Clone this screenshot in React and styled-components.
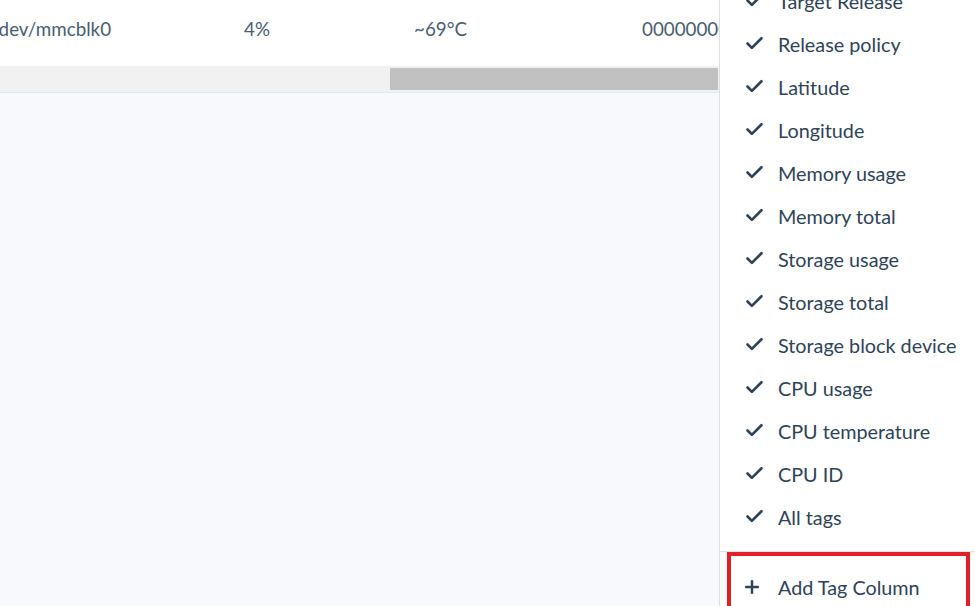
import React from 'react';
import styled, { createGlobalStyle } from 'styled-components';
import { Check, Plus } from 'lucide-react';

const GlobalStyle = createGlobalStyle`
  html, body {
    margin: 0;
    padding: 0;
    background: #f8f9fc;
    font-family: Lato, "Open Sans", sans-serif;
  }
`;

const Page = styled.div`
  position: relative;
  height: 606px;
  overflow: hidden;
`;

const TableArea = styled.div`
  width: 719px;
  border-bottom: 1px solid #e6e8ec;
`;

const RowViewport = styled.div`
  height: 66px;
  background: #fff;
  overflow: hidden;
`;

const Track = styled.div`
  display: grid;
  grid-template-columns: 253px 170px 228px 300px;
  height: 100%;
  box-sizing: border-box;
  padding-bottom: 9px;
  align-items: center;
  transform: translateX(-9px);
`;

const Cell = styled.div`
  font-size: 18.8px;
  line-height: 24px;
  color: #4a5d72;
  white-space: nowrap;
`;

const Scrollbar = styled.div`
  position: relative;
  height: 26px;
  background: #f1f1f1;
`;

const Thumb = styled.div`
  position: absolute;
  top: 2px;
  bottom: 2px;
  left: 390px;
  right: 1px;
  background: #c1c1c1;
`;

const Panel = styled.div`
  position: absolute;
  top: 0;
  right: 0;
  bottom: 0;
  width: 255px;
  background: #fff;
  border-left: 1px solid #dcdfe4;
`;

const List = styled.ul`
  list-style: none;
  margin: -21px 0 0;
  padding: 0 0 13px;
`;

const Item = styled.li`
  display: flex;
  align-items: center;
  height: 43px;
  padding-left: 24px;
  gap: 13px;
  font-size: 19.8px;
  line-height: 24px;
  color: #2f4358;
  white-space: nowrap;

  svg {
    flex: none;
    color: #2f4358;
  }
`;

const Divider = styled.div`
  height: 1px;
  background: #dcdfe4;
`;

const AddBox = styled.div`
  display: flex;
  align-items: center;
  gap: 16px;
  margin: 0 5px 0 7px;
  height: 66px;
  padding: 4px 0 0 11px;
  box-sizing: border-box;
  border: 4px solid #e11f27;
  font-size: 19.8px;
  color: #2f4358;

  svg {
    flex: none;
  }
`;

const columns = [
  'Target Release',
  'Release policy',
  'Latitude',
  'Longitude',
  'Memory usage',
  'Memory total',
  'Storage usage',
  'Storage total',
  'Storage block device',
  'CPU usage',
  'CPU temperature',
  'CPU ID',
  'All tags',
];

export default function App() {
  return (
    <Page>
      <GlobalStyle />
      <TableArea>
        <RowViewport>
          <Track>
            <Cell>/dev/mmcblk0</Cell>
            <Cell>4%</Cell>
            <Cell>~69°C</Cell>
            <Cell>00000000c3a7e5f1</Cell>
          </Track>
        </RowViewport>
        <Scrollbar>
          <Thumb />
        </Scrollbar>
      </TableArea>
      <Panel>
        <List>
          {columns.map((c) => (
            <Item key={c}>
              <Check size={21} strokeWidth={3} />
              {c}
            </Item>
          ))}
        </List>
        <Divider />
        <AddBox>
          <Plus size={20} strokeWidth={3} />
          Add Tag Column
        </AddBox>
      </Panel>
    </Page>
  );
}
